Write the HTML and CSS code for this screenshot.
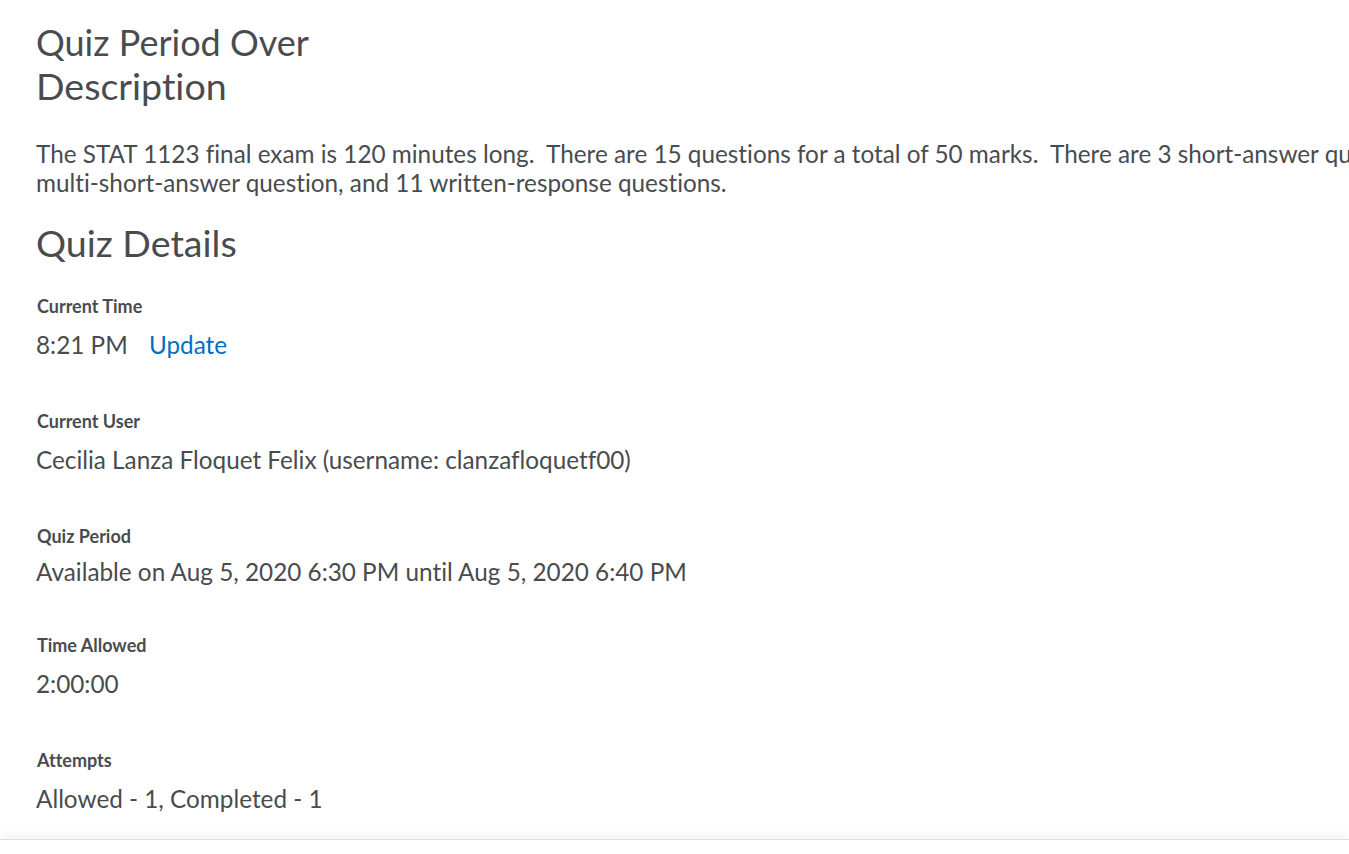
FILE: index.html
```html
<!DOCTYPE html>
<html lang="en">
<head>
<meta charset="utf-8">
<title>Quiz Period Over</title>
<link rel="stylesheet" href="styles.css">
</head>
<body>
<main class="page">
  <h1 class="title">Quiz Period Over</h1>
  <h2 class="heading">Description</h2>
  <p class="description">The STAT 1123 final exam is 120 minutes long.&nbsp; There are 15 questions for a total of 50 marks.&nbsp; There are 3 short-answer questions, 1 multi-short-answer question, and 11 written-response questions.</p>
  <h2 class="heading heading-details">Quiz Details</h2>
  <dl class="details">
    <div class="detail">
      <dt class="label">Current Time</dt>
      <dd class="value">8:21 PM <a class="link" href="#">Update</a></dd>
    </div>
    <div class="detail">
      <dt class="label">Current User</dt>
      <dd class="value">Cecilia Lanza Floquet Felix (username: clanzafloquetf00)</dd>
    </div>
    <div class="detail detail-tight">
      <dt class="label">Quiz Period</dt>
      <dd class="value value-tight">Available on Aug 5, 2020 6:30 PM until Aug 5, 2020 6:40 PM</dd>
    </div>
    <div class="detail">
      <dt class="label">Time Allowed</dt>
      <dd class="value">2:00:00</dd>
    </div>
    <div class="detail">
      <dt class="label">Attempts</dt>
      <dd class="value">Allowed - 1, Completed - 1</dd>
    </div>
  </dl>
</main>
<footer class="footer"></footer>
</body>
</html>
```
FILE: styles.css
```css
html, body {
  margin: 0;
  padding: 0;
  background: #ffffff;
  overflow: hidden;
}
body {
  font-family: Lato, "Open Sans", sans-serif;
  font-variant-ligatures: none;
  color: #494c4e;
  height: 854px;
}
.page {
  padding: 21px 0 0 36px;
  width: 1460px;
}
.title, .heading {
  margin: 0;
  font-size: 36px;
  font-weight: 400;
  line-height: 43px;
  color: #494c4e;
}
.heading {
  font-size: 37.6px;
}
.description {
  margin: 32px 0 0 0;
  font-size: 24.3px;
  line-height: 29px;
}
.heading-details {
  margin-top: 24px;
}
.details {
  margin: 31px 0 0 0;
}
.detail {
  margin-bottom: 51px;
}
.detail-tight {
  margin-bottom: 48px;
}
.label {
  margin-left: 1px;
  font-size: 18px;
  font-weight: 700;
  line-height: 22px;
  color: #494c4e;
}
.value {
  margin: 13px 0 0 0;
  font-size: 24.3px;
  line-height: 29px;
}
.value-tight {
  margin-top: 10px;
}
.link {
  margin-left: 15px;
  color: #006fbf;
  text-decoration: none;
}
.footer {
  position: fixed;
  left: 0;
  right: 0;
  bottom: 0;
  height: 14px;
  background: #ffffff;
  border-top: 1px solid #dde1e6;
  box-shadow: 0 -5px 6px rgba(0, 0, 0, 0.04);
}
```
